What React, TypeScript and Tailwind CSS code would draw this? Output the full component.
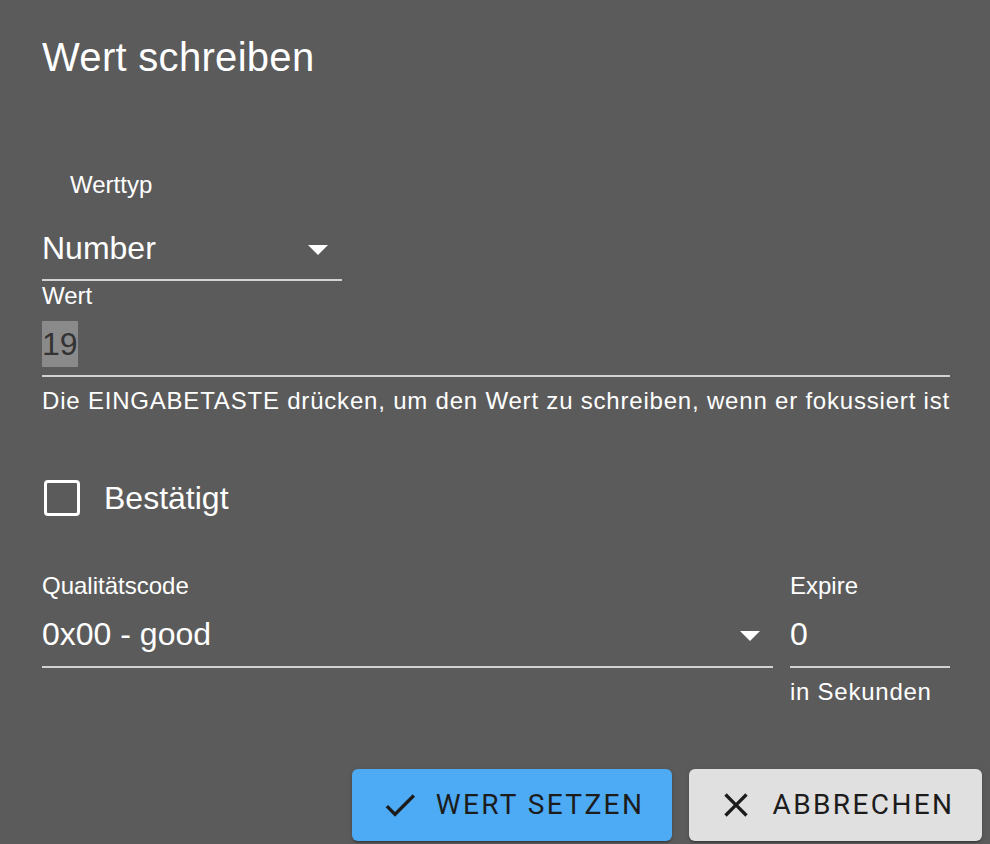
import React from "react";

const sans = { fontFamily: '"Liberation Sans", Arial, sans-serif' };

function DropArrow() {
  return (
    <svg width="20" height="10" viewBox="0 0 20 10" className="shrink-0 mt-[4px]">
      <path d="M0 0 L20 0 L10 10 Z" fill="#ffffff" />
    </svg>
  );
}

function CheckIcon() {
  return (
    <svg width="40" height="40" viewBox="0 0 24 24" className="shrink-0">
      <path d="M9 16.17 4.83 12l-1.42 1.42L9 19 21 7l-1.41-1.41z" fill="#1c1c1c" />
    </svg>
  );
}

function CloseIcon() {
  return (
    <svg width="40" height="40" viewBox="0 0 24 24" className="shrink-0">
      <path
        d="M19 6.41 17.59 5 12 10.59 6.41 5 5 6.41 10.59 12 5 17.59 6.41 19 12 13.41 17.59 19 19 17.59 13.41 12z"
        fill="#1c1c1c"
      />
    </svg>
  );
}

export default function App() {
  return (
    <div className="w-[990px] h-[844px] bg-[#5b5b5b] text-white overflow-hidden" style={sans}>
      <div className="pl-[42px] pr-[40px]">
        {/* dialog title */}
        <h1 className="pt-[33px] text-[40px] leading-[48px] font-normal tracking-[0.3px]">Wert schreiben</h1>

        {/* value type select */}
        <div className="mt-[90px] ml-[28px] text-[24px] leading-[28px]">Werttyp</div>
        <div className="mt-[31px] w-[300px] border-b-2 border-[#d2d2d2] pb-[13px] flex items-center justify-between pr-[14px]">
          <span className="text-[32px] leading-[36px]">Number</span>
          <DropArrow />
        </div>

        {/* value input */}
        <div className="mt-[1px] text-[24px] leading-[28px]">Wert</div>
        <div className="mt-[11px] border-b-2 border-[#d2d2d2] pb-[8px]">
          <span className="inline-block h-[46px] bg-[#8a8a8a] text-[#333333] text-[32px] leading-[46px]">19</span>
        </div>
        <p className="mt-[10px] text-[24px] leading-[28px] tracking-[0.8px] whitespace-nowrap">
          Die EINGABETASTE drücken, um den Wert zu schreiben, wenn er fokussiert ist
        </p>

        {/* acknowledged checkbox */}
        <label className="mt-[65px] flex items-center h-[36px]">
          <span className="ml-[2px] w-[36px] h-[36px] border-[3px] border-white rounded-[4px]" />
          <span className="ml-[24px] text-[32px] leading-[36px]">Bestätigt</span>
        </label>

        {/* quality code + expire */}
        <div className="mt-[56px] flex gap-[17px]">
          <div className="w-[731px]">
            <div className="text-[24px] leading-[28px]">Qualitätscode</div>
            <div className="mt-[16px] border-b-2 border-[#d2d2d2] pb-[14px] flex items-center justify-between pr-[13px]">
              <span className="text-[32px] leading-[36px]">0x00 - good</span>
              <DropArrow />
            </div>
          </div>
          <div className="w-[160px]">
            <div className="text-[24px] leading-[28px]">Expire</div>
            <div className="mt-[16px] border-b-2 border-[#d2d2d2] pb-[14px]">
              <span className="text-[32px] leading-[36px]">0</span>
            </div>
            <div className="mt-[10px] text-[24px] leading-[28px] tracking-[0.75px]">in Sekunden</div>
          </div>
        </div>
      </div>

      {/* dialog actions */}
      <div
        className="mt-[63px] flex justify-end gap-[17px] pr-[8px]"
        style={{ fontFamily: 'Roboto, "Liberation Sans", sans-serif' }}
      >
        <button className="w-[320px] h-[72px] rounded-[6px] bg-[#4dabf5] text-[#1c1c1c] flex items-center justify-center gap-[16px] text-[28px] font-normal tracking-[2.4px] shadow-[0_3px_1px_-2px_rgba(0,0,0,0.2),0_2px_2px_0_rgba(0,0,0,0.14),0_1px_5px_0_rgba(0,0,0,0.12)]">
          <CheckIcon />
          <span>WERT SETZEN</span>
        </button>
        <button className="w-[293px] h-[72px] rounded-[6px] bg-[#e0e0e0] text-[#1c1c1c] flex items-center justify-center gap-[16px] text-[28px] font-normal tracking-[2.4px] shadow-[0_3px_1px_-2px_rgba(0,0,0,0.2),0_2px_2px_0_rgba(0,0,0,0.14),0_1px_5px_0_rgba(0,0,0,0.12)]">
          <CloseIcon />
          <span>ABBRECHEN</span>
        </button>
      </div>
    </div>
  );
}
